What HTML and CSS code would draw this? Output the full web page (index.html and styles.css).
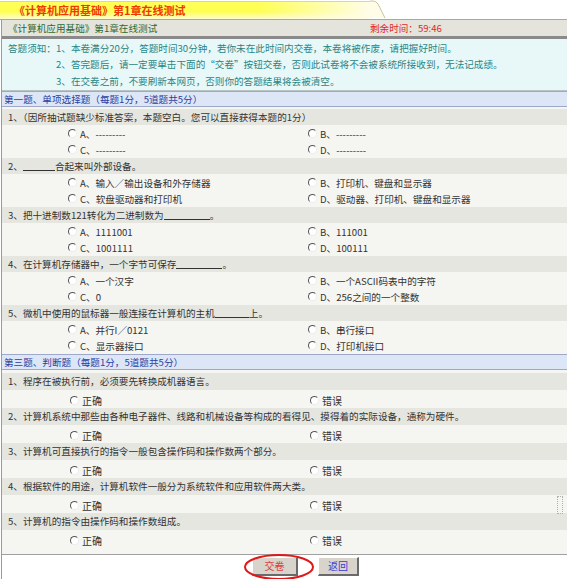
FILE: index.html
```html
<!DOCTYPE html>
<html lang="zh-CN">
<head>
    <meta charset="UTF-8">
    <title>《计算机应用基础》第1章在线测试</title>
    <link rel="stylesheet" href="styles.css">
</head>
<body>
    <div class="tabbar">
        <div class="tab">《计算机应用基础》第1章在线测试</div>
        <svg class="tab-edge" width="16" height="19" viewBox="0 0 16 19">
            <path d="M0 1 L3 1 Q6 1 8 4 L15 18 L0 18 Z" fill="#fffde8"/>
            <path d="M0 1 L3 1 Q6 1 8 4 L15 18" fill="none" stroke="#c8c4a0" stroke-width="1"/>
        </svg>
    </div>

    <div class="page">
        <div class="infobar">
            <span class="course">《计算机应用基础》第1章在线测试</span>
            <span class="timer">剩余时间：59:46</span>
        </div>

        <div class="notes">
            <span class="notes-label">答题须知：</span>
            <span>1、本卷满分20分，答题时间30分钟，若你未在此时间内交卷，本卷将被作废，请把握好时间。</span>
            <span></span>
            <span>2、答完题后，请一定要单击下面的“交卷”按钮交卷，否则此试卷将不会被系统所接收到，无法记成绩。</span>
            <span></span>
            <span>3、在交卷之前，不要刷新本网页，否则你的答题结果将会被清空。</span>
        </div>

        <div class="section-title">第一题、单项选择题（每题1分，5道题共5分）</div>

        <div class="choice-list">
            <div class="question">
                <div class="q-text">1、（因所抽试题缺少标准答案，本题空白。您可以直接获得本题的1分）</div>
                <div class="options">
                    <label class="opt"><span class="radio"></span>A、---------</label>
                    <label class="opt"><span class="radio"></span>B、---------</label>
                    <label class="opt"><span class="radio"></span>C、---------</label>
                    <label class="opt"><span class="radio"></span>D、---------</label>
                </div>
            </div>

            <div class="question">
                <div class="q-text">2、<span class="blank w32"></span>合起来叫外部设备。</div>
                <div class="options">
                    <label class="opt"><span class="radio"></span>A、输入／输出设备和外存储器</label>
                    <label class="opt"><span class="radio"></span>B、打印机、键盘和显示器</label>
                    <label class="opt"><span class="radio"></span>C、软盘驱动器和打印机</label>
                    <label class="opt"><span class="radio"></span>D、驱动器、打印机、键盘和显示器</label>
                </div>
            </div>

            <div class="question">
                <div class="q-text">3、把十进制数121转化为二进制数为<span class="blank w46"></span>。</div>
                <div class="options">
                    <label class="opt"><span class="radio"></span>A、1111001</label>
                    <label class="opt"><span class="radio"></span>B、111001</label>
                    <label class="opt"><span class="radio"></span>C、1001111</label>
                    <label class="opt"><span class="radio"></span>D、100111</label>
                </div>
            </div>

            <div class="question">
                <div class="q-text">4、在计算机存储器中，一个字节可保存<span class="blank w46"></span>。</div>
                <div class="options">
                    <label class="opt"><span class="radio"></span>A、一个汉字</label>
                    <label class="opt"><span class="radio"></span>B、一个ASCII码表中的字符</label>
                    <label class="opt"><span class="radio"></span>C、0</label>
                    <label class="opt"><span class="radio"></span>D、256之间的一个整数</label>
                </div>
            </div>

            <div class="question">
                <div class="q-text">5、微机中使用的鼠标器一般连接在计算机的主机<span class="blank w34"></span>上。</div>
                <div class="options">
                    <label class="opt"><span class="radio"></span>A、并行I／0121</label>
                    <label class="opt"><span class="radio"></span>B、串行接口</label>
                    <label class="opt"><span class="radio"></span>C、显示器接口</label>
                    <label class="opt"><span class="radio"></span>D、打印机接口</label>
                </div>
            </div>
        </div>

        <div class="section-title">第三题、判断题（每题1分，5道题共5分）</div>

        <div class="judge-list">
            <div class="question judge">
                <div class="q-text">1、程序在被执行前，必须要先转换成机器语言。</div>
                <div class="options">
                    <label class="opt"><span class="radio"></span>正确</label>
                    <label class="opt"><span class="radio"></span>错误</label>
                </div>
            </div>
            <div class="question judge">
                <div class="q-text">2、计算机系统中那些由各种电子器件、线路和机械设备等构成的看得见、摸得着的实际设备，通称为硬件。</div>
                <div class="options">
                    <label class="opt"><span class="radio"></span>正确</label>
                    <label class="opt"><span class="radio"></span>错误</label>
                </div>
            </div>
            <div class="question judge">
                <div class="q-text">3、计算机可直接执行的指令一般包含操作码和操作数两个部分。</div>
                <div class="options">
                    <label class="opt"><span class="radio"></span>正确</label>
                    <label class="opt"><span class="radio"></span>错误</label>
                </div>
            </div>
            <div class="question judge">
                <div class="q-text">4、根据软件的用途，计算机软件一般分为系统软件和应用软件两大类。</div>
                <div class="options">
                    <label class="opt"><span class="radio"></span>正确</label>
                    <label class="opt"><span class="radio"></span>错误<span class="grip"></span></label>
                </div>
            </div>
            <div class="question judge">
                <div class="q-text">5、计算机的指令由操作码和操作数组成。</div>
                <div class="options">
                    <label class="opt"><span class="radio"></span>正确</label>
                    <label class="opt"><span class="radio"></span>错误</label>
                </div>
            </div>
        </div>

        <div class="actions">
            <button class="btn btn-submit">交卷</button>
            <button class="btn btn-back">返回</button>
            <!-- red circle marking the submit button -->
            <svg class="mark" width="72" height="28" viewBox="0 0 72 28">
                <ellipse cx="36" cy="14" rx="34" ry="12" fill="none" stroke="#e01818" stroke-width="2"/>
            </svg>
        </div>
    </div>
</body>
</html>
```

FILE: styles.css
```css
body {
    margin: 0;
    background-color: #fff;
    font-family: "Noto Sans CJK SC", sans-serif;
    font-size: 9.6px;
    color: #333;
}

.tabbar {
    display: flex;
    align-items: flex-end;
    height: 19px;
    border-bottom: 1px solid #a8a8a0;
}

.tab {
    width: 356px;
    height: 17px;
    line-height: 17px;
    padding-left: 14px;
    border-top: 1px solid #d8d4b0;
    background:
        linear-gradient(to right, rgba(255, 253, 232, 0) 70%, #fffde8 100%),
        linear-gradient(to bottom, #ffff5c 0%, #ffff50 55%, #fffbd0 100%);
    color: #ee3a00;
    font-size: 11px;
    font-weight: bold;
    white-space: nowrap;
}

.tab-edge {
    display: block;
}

.page {
    border-left: 1px solid #9a9a9a;
    margin-left: 1px;
    position: relative;
}

.infobar {
    display: flex;
    height: 16px;
    line-height: 16px;
    background-color: #e4e4dc;
    border-bottom: 3px solid #8a8a8a;
}

.course {
    width: 362px;
    padding-left: 6px;
    color: #2f6a2f;
}

.timer {
    color: #e02828;
}

.notes {
    display: grid;
    grid-template-columns: 48px 1fr;
    padding: 1px 0 1px 6px;
    line-height: 16.3px;
    background-color: #e8f8f8;
    border-bottom: 1px solid #b8c4c4;
    color: #2a8484;
}

.section-title {
    height: 14px;
    line-height: 14px;
    padding-left: 2px;
    background-color: #dde6f7;
    border-top: 1px solid #9ea8c8;
    border-bottom: 1px solid #9ea8c8;
    color: #2a3fa0;
}

.choice-list {
    padding-top: 2px;
    background-color: #f5f5f1;
}

.q-text {
    height: 16px;
    line-height: 16px;
    padding-left: 6px;
    background-color: #e6e6e0;
    white-space: nowrap;
}

.blank {
    display: inline-block;
    height: 10px;
    border-bottom: 1px solid #333;
    vertical-align: -1px;
}

.w32 { width: 32px; }
.w46 { width: 46px; }
.w34 { width: 34px; }

.options {
    display: grid;
    grid-template-columns: 240px 1fr;
    grid-auto-rows: 16px;
    padding: 1px 0 0 66px;
    background-color: #f5f5f1;
}

.opt {
    display: flex;
    align-items: center;
    white-space: nowrap;
}

.radio {
    box-sizing: border-box;
    width: 9px;
    height: 9px;
    margin-right: 3px;
    border: 1px solid;
    border-color: #555 #ececec #ececec #555;
    border-radius: 50%;
    background-color: #fff;
}

.judge-list {
    padding: 3px 0 6px;
    background-color: #f5f5f1;
}

.judge .q-text {
    height: 17px;
    line-height: 17px;
}

.judge .options {
    grid-auto-rows: 15px;
    padding: 3px 0 0 68px;
}

.judge .opt {
    font-size: 10px;
}

.grip {
    width: 4px;
    height: 16px;
    margin-left: auto;
    margin-right: 4px;
    border: 1px dotted #b0b0b0;
}

.actions {
    position: relative;
    display: flex;
    gap: 20px;
    height: 25px;
    padding-left: 250px;
    border-top: 1px solid #a0a0a0;
}

.btn {
    margin-top: 2px;
    height: 19px;
    padding: 0;
    font-family: "Noto Sans CJK SC", sans-serif;
    font-size: 10px;
    background-color: #d8d4cc;
    border: 1px solid;
    border-color: #fff #6a6a6a #6a6a6a #fff;
    border-right-width: 2px;
    border-bottom-width: 2px;
}

.btn-submit {
    width: 46px;
    color: #e03c3c;
}

.btn-back {
    width: 41px;
    color: #3a3ad8;
}

.mark {
    position: absolute;
    left: 241px;
    top: -2px;
}
```
